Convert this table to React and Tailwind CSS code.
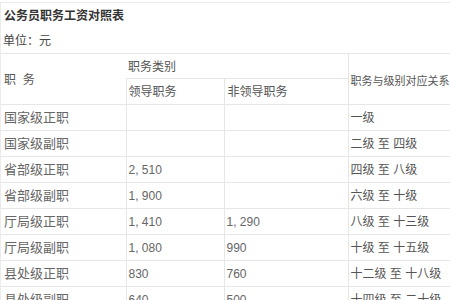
const rows = [
  { zhiwu: "国家级正职", lingdao: "", feilingdao: "", jibie: "一级" },
  { zhiwu: "国家级副职", lingdao: "", feilingdao: "", jibie: "二级 至 四级" },
  { zhiwu: "省部级正职", lingdao: "2, 510", feilingdao: "", jibie: "四级 至 八级" },
  { zhiwu: "省部级副职", lingdao: "1, 900", feilingdao: "", jibie: "六级 至 十级" },
  { zhiwu: "厅局级正职", lingdao: "1, 410", feilingdao: "1, 290", jibie: "八级 至 十三级" },
  { zhiwu: "厅局级副职", lingdao: "1, 080", feilingdao: "990", jibie: "十级 至 十五级" },
  { zhiwu: "县处级正职", lingdao: "830", feilingdao: "760", jibie: "十二级 至 十八级" },
  { zhiwu: "县处级副职", lingdao: "640", feilingdao: "500", jibie: "十四级 至 二十级" },
];

export default function App() {
  return (
    <div
      className="w-[450px] h-[300px] overflow-hidden bg-white text-[12px] text-[#555] border-l border-t border-[#ececec] mt-[2px]"
      style={{ fontFamily: '"Liberation Sans", "Noto Sans CJK SC", sans-serif' }}
    >
      <div className="h-[25px] flex items-center pl-[3px] font-bold text-[#333]">
        公务员职务工资对照表
      </div>
      <div className="h-[25px] flex items-center pl-[2px] text-[#444]">单位：元</div>
      <table className="table-fixed border-collapse w-[450px]">
        <colgroup>
          <col className="w-[125px]" />
          <col className="w-[98px]" />
          <col className="w-[124px]" />
          <col className="w-[103px]" />
        </colgroup>
        <thead>
          <tr className="h-[25px]">
            <th rowSpan={2} className="border-t border-b border-[#e6e6e6] text-left font-normal pl-[3px] pt-[2px]">
              职&nbsp;&nbsp;务
            </th>
            <th colSpan={2} className="border-t border-b border-[#e6e6e6] text-left font-normal pl-[2px] pt-[1px]">
              职务类别
            </th>
            <th rowSpan={2} className="border border-r-0 border-[#e6e6e6] text-left font-normal pl-[2px] pt-[4px] whitespace-nowrap text-[11px]">
              职务与级别对应关系
            </th>
          </tr>
          <tr className="h-[26px]">
            <th className="border border-[#e6e6e6] text-left font-normal pl-[2px] pt-[1px]">领导职务</th>
            <th className="border border-[#e6e6e6] text-left font-normal pl-[3px] pt-[1px]">非领导职务</th>
          </tr>
        </thead>
        <tbody>
          {rows.map((r) => (
            <tr key={r.zhiwu} className="h-[26px]">
              <td className="border-b border-[#e6e6e6] pl-[3px] text-[13px] text-[#666]">{r.zhiwu}</td>
              <td className="border border-[#e6e6e6] pl-[2px] text-[#666]">{r.lingdao}</td>
              <td className="border border-[#e6e6e6] pl-[2px] text-[#666]">{r.feilingdao}</td>
              <td className="border border-r-0 border-[#e6e6e6] pl-[2px] text-[#555] whitespace-nowrap">{r.jibie}</td>
            </tr>
          ))}
        </tbody>
      </table>
    </div>
  );
}
